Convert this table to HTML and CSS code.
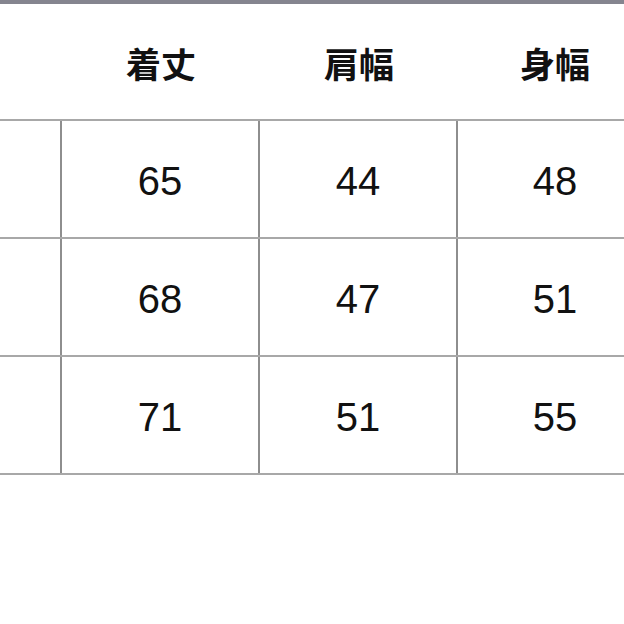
FILE: index.html
```html
<!DOCTYPE html>
<html lang="ja">
<head>
<meta charset="utf-8">
<link rel="stylesheet" href="styles.css">
</head>
<body>
<div class="topbar"></div>
<div class="sheet">
  <div class="row head">
    <div class="cell c1"></div>
    <div class="cell">着丈</div>
    <div class="cell">肩幅</div>
    <div class="cell">身幅</div>
  </div>
  <div class="row body">
    <div class="cell c1"></div>
    <div class="cell">65</div>
    <div class="cell">44</div>
    <div class="cell">48</div>
  </div>
  <div class="row body">
    <div class="cell c1"></div>
    <div class="cell">68</div>
    <div class="cell">47</div>
    <div class="cell">51</div>
  </div>
  <div class="row body">
    <div class="cell c1"></div>
    <div class="cell">71</div>
    <div class="cell">51</div>
    <div class="cell">55</div>
  </div>
</div>
</body>
</html>
```
FILE: styles.css
```css
html, body {
  margin: 0;
  padding: 0;
  background: #ffffff;
  overflow: hidden;
}
body {
  width: 624px;
  height: 624px;
}
.topbar {
  height: 4px;
  background: #85858f;
}
.sheet {
  width: 624px;
}
.row {
  display: grid;
  grid-template-columns: 62px 198px 198px 166px;
  box-sizing: border-box;
  border-bottom: 2px solid #a8a8a8;
}
.head {
  height: 117px;
}
.body {
  height: 118px;
}
.cell {
  box-sizing: border-box;
  display: flex;
  align-items: center;
  justify-content: center;
  color: #111111;
}
.cell:last-child {
  padding-left: 28px;
}
.head .cell {
  font-family: "Noto Sans CJK JP", "Noto Sans CJK SC", sans-serif;
  font-weight: 700;
  font-size: 35px;
  padding-top: 2px;
}
.body .cell {
  font-family: "Liberation Sans", Arial, sans-serif;
  font-size: 40px;
  border-right: 2px solid #8e8e8e;
  padding-top: 4px;
}
.body .cell:last-child {
  border-right: 0;
}
```
